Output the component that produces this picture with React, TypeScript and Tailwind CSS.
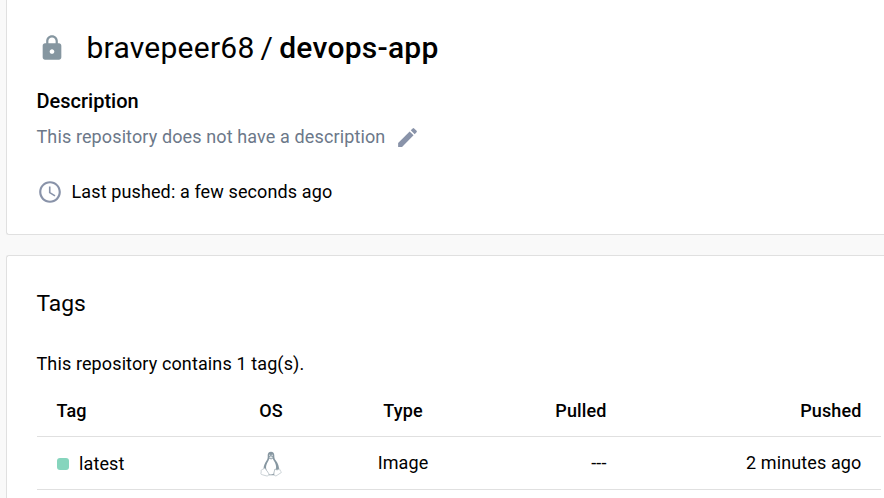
import { MdAccessTime, MdEdit, MdLock } from "react-icons/md";

function Penguin() {
  return (
    <svg viewBox="0 0 22 26" className="h-[26px] w-[22px]" fill="none">
      <path
        d="M11 .7c-2.2 0-3.4 1.5-3.3 3.6.1 2.4.1 3.3-1.1 5.2-1.7 2.700-3.300 5.400-3 9.200l5 5.600h6l4.400-5.500c.2-3.500-1-6.400-3-9-1.500-2-1.700-3-1.700-5.300C14.300 2.200 13.200.7 11 .7Z"
        fill="#8797a1"
      />
      <path
        d="M9.300 7.600c-.4 2-2 3.900-2.800 6.200-.7 2-.7 4.200.5 6l1.600 3.100c1.500.8 3.700.7 5-.2l.7-3.900 1.800-1.200c.3-3.300-.8-5.700-2.400-8.100-.5-.8-.7-1.400-.9-2.100l-1.700 1Z"
        fill="#fff"
      />
      <path d="m9 6.300 1.700-1 2.300.8-1.900 1.600Z" fill="#e5eaec" />
      <circle cx="9.700" cy="4.300" r=".7" fill="#dce2e5" />
      <circle cx="12.200" cy="4.300" r=".8" fill="#dce2e5" />
      <path
        d="M3.700 17.700c-.6.9-2.200.6-2.500 1.600-.2.900.2 1.700-.2 2.700-.3 1 .1 1.500 1.200 1.700l3.900 1.100c1.300.5 2.600-.1 2.800-1.400.1-1.200-2.200-3.700-3.200-5.200-.6-.9-1.400-1.200-2-.5Z"
        fill="#fff"
        stroke="#b3bdc3"
        strokeWidth=".7"
      />
      <path
        d="M15 18c-.7 1.800-1.100 3.700-1 5.200.1 1.800 1.900 2.200 3.200 1l3.400-2.200c1-.5.9-1.100.1-1.700-.7-.6-.5-2-1.500-2.500-.9 1.300-2.900 1.600-4.200.2Z"
        fill="#fff"
        stroke="#b3bdc3"
        strokeWidth=".7"
      />
    </svg>
  );
}

export default function App() {
  return (
    <main className="flex h-[498px] w-[884px] flex-col gap-5 overflow-hidden bg-[#f9f9f9] pl-1.5 font-[Roboto,sans-serif] text-[18px] leading-6 tracking-[0.12px] text-black">
      <section className="-mr-1 h-[235px] shrink-0 rounded-bl-[3px] border-b border-l border-[#e0e0e0] bg-white pl-[29.5px]">
        <h1 className="flex h-[72px] items-center pt-6 text-[30px] leading-9 tracking-[0.25px]">
          <MdLock className="ml-[1.5px] mr-[20.500px] size-7 text-[#8596a0]" />
          <span>bravepeer68</span>
          <span className="mx-[6px]">/</span>
          <span className="font-medium">devops-app</span>
        </h1>
        <h2 className="mt-[17px] text-[20px] font-medium leading-6 tracking-normal">Description</h2>
        <div className="mt-3 flex h-6 items-center gap-[10px] text-[#6c7889]">
          <span>This repository does not have a description</span>
          <MdEdit className="size-[25px] text-[#8993a9]" />
        </div>
        <div className="mt-[30px] flex h-[26px] items-center gap-[9px]">
          <MdAccessTime className="size-[26px] text-[#8993a9]" />
          <span>Last pushed: a few seconds ago</span>
        </div>
      </section>

      <section className="-mr-1 flex-1 rounded-tl-[3px] border-l border-t border-[#e0e0e0] bg-white pl-[30px] pr-[7px]">
        <h2 className="-ml-[0.5px] mt-8 text-[22.8px] leading-8 tracking-normal">Tags</h2>
        <p className="-ml-[0.5px] mt-8">This repository contains 1 tag(s).</p>
        <table className="mt-[9px] w-[844px] table-fixed border-collapse">
          <colgroup>
            <col className="w-[163px]" />
            <col className="w-[142px]" />
            <col className="w-[122px]" />
            <col className="w-[163px]" />
            <col className="w-[254px]" />
          </colgroup>
          <thead>
            <tr className="h-[51px] border-b border-[#e0e0e0]">
              <th className="p-0 pl-[19.5px] pt-px text-left font-medium">Tag</th>
              <th className="p-0 pt-px text-center font-medium">OS</th>
              <th className="p-0 pt-px text-center font-medium">Type</th>
              <th className="p-0 pr-[20.5px] pt-px text-right font-medium">Pulled</th>
              <th className="p-0 pr-[19.5px] pt-px text-right font-medium">Pushed</th>
            </tr>
          </thead>
          <tbody>
            <tr className="h-[53px] border-b border-[#e0e0e0]">
              <td className="p-0 pl-5 pt-[2px]">
                <div className="flex items-center gap-[10px]">
                  <span className="size-3 rounded-[3px] bg-[#86d5bd]" />
                  <span>latest</span>
                </div>
              </td>
              <td className="p-0 pt-[2px]">
                <div className="flex justify-center"><Penguin /></div>
              </td>
              <td className="p-0 text-center">Image</td>
              <td className="p-0 pr-[20.5px] text-right">---</td>
              <td className="p-0 pr-[19.5px] text-right">2 minutes ago</td>
            </tr>
          </tbody>
        </table>
      </section>
    </main>
  );
}
